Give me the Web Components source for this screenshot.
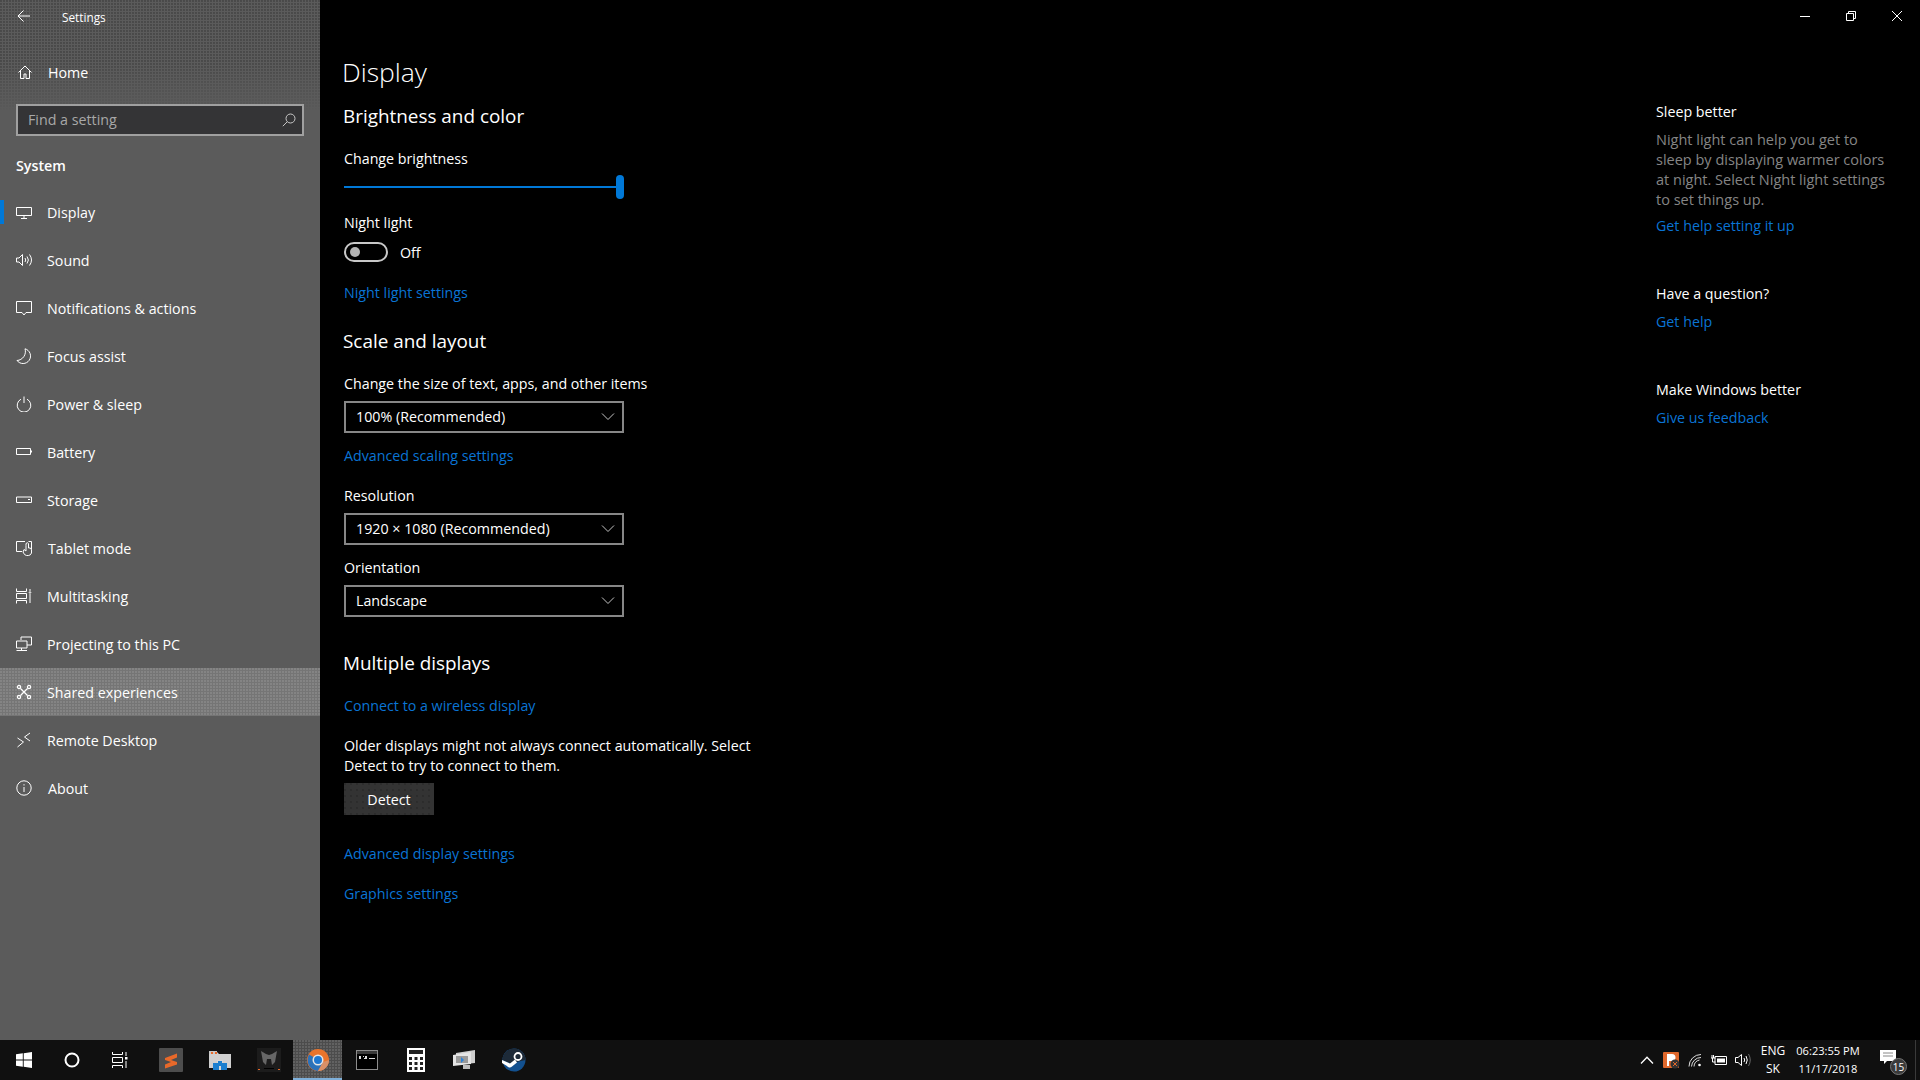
<!DOCTYPE html>
<html><head><meta charset="utf-8"><title>Settings</title>
<style>
html,body{margin:0;padding:0;background:#000;height:100%;overflow:hidden}
body{font-family:"Open Sans","Noto Sans",sans-serif;font-size:14.25px;color:#fff}
</style></head>
<body>
<win-desktop>
  <settings-sidebar slot="side">
    <nav-item icon="display" active>Display</nav-item>
    <nav-item icon="sound">Sound</nav-item>
    <nav-item icon="notif">Notifications &amp; actions</nav-item>
    <nav-item icon="moon">Focus assist</nav-item>
    <nav-item icon="power">Power &amp; sleep</nav-item>
    <nav-item icon="battery">Battery</nav-item>
    <nav-item icon="storage">Storage</nav-item>
    <nav-item icon="tablet" nudge>Tablet mode</nav-item>
    <nav-item icon="multi">Multitasking</nav-item>
    <nav-item icon="project">Projecting to this PC</nav-item>
    <nav-item icon="shared" hover>Shared experiences</nav-item>
    <nav-item icon="remote">Remote Desktop</nav-item>
    <nav-item icon="about" nudge>About</nav-item>
  </settings-sidebar>
  <display-page slot="main"></display-page>
  <help-rail slot="rail"></help-rail>
  <window-controls slot="controls"></window-controls>
  <task-bar slot="bar"></task-bar>
</win-desktop>
<script>
const ICONS={
 home:'<path d="M1.500 8.500 8 2l6.500 6.500M3.500 7v7.500h3.500V10h2v4.500h3.500V7"/>',
 display:'<path d="M.5 3.500h15v8H.5zM8 11.500v2.500M5 14.500h6"/>',
 sound:'<path d="M.5 6h2.500L6.500 2.500v11L3 10H.5zM9 6q1.500 2 0 4M11 4.500q2.800 3.500 0 7M13.500 2.500q4 5.500 0 11"/>',
 notif:'<path d="M.5 1.500h15v11H10l-2 2.500-2-2.500H.5z"/>',
 moon:'<path d="M9 .8A7.500 7.500 0 1 1 1 12.500 9 9 0 0 0 9 .8z"/>',
 power:'<path d="M5 3.200a6.800 6.800 0 1 0 6 0M8 .5v6.500"/>',
 battery:'<path d="M.5 4.500h14v6H.5zM15.500 6.500v2"/>',
 storage:'<path d="M.5 5h15v5.500H.5z"/><path d="M12 7.500h2"/>',
 tablet:'<path d="M6 11.500H.5V1.500H9M12.500 1.500h3V9"/><path d="M10 5.500V3.500q1.500-1.500 2.500 0V8h1.500q1.500.5 1.500 2v3q-1 2.500-3 2.500h-2q-2 0-3.500-3.500L8 9.500l2 1.500z"/>',
 multi:'<path d="M.5.500v3h10v-3M.5 15.500v-3h10v3M.5 5.500h10v5H.5z"/><path d="M14 1v2M14 6v9" /><circle cx="14" cy="4.500" r=".8"/>',
 project:'<path d="M5 4V1h10.500v8H11"/><path d="M.5 5h10.500v7H.5zM.5 14.500h10.500M5.500 12v2.500"/>',
 shared:'<g stroke-width="1.300"><circle cx="3" cy="3" r="1.600"/><circle cx="13" cy="3" r="1.600"/><circle cx="3" cy="13" r="1.600"/><circle cx="13" cy="13" r="1.600"/><path d="M4.500 4.500l7 7M11.500 4.500l-7 7"/></g>',
 remote:'<path d="M1.500 6l6 4-6 5M14 1L8.500 5 14 9"/>',
 about:'<circle cx="8" cy="8" r="7.200"/><path d="M8 7v5M8 4.200v1.300"/>'
};
function svg(name,size=16,sw=1,color='#fff'){return `<svg width="${size}" height="${size}" viewBox="0 0 16 16" fill="none" stroke="${color}" stroke-width="${sw}">${ICONS[name]}</svg>`}
function def(tag,html,extra){customElements.define(tag,class extends HTMLElement{
  connectedCallback(){ if(this.shadowRoot) return; const s=this.attachShadow({mode:'open'}); s.innerHTML=typeof html==='function'?html(this):html; extra&&extra(this,s);} })}

const DITHER=`radial-gradient(circle at 1px 1px,#444 .6px,transparent 1px)`;

def('win-desktop',`<style>
:host{display:grid;grid-template-columns:320px 1fr 264px;grid-template-rows:1040px 40px;width:1920px;height:1080px;background:#000;position:relative}
::slotted([slot=side]){grid-column:1;grid-row:1}
::slotted([slot=main]){grid-column:2;grid-row:1}
::slotted([slot=rail]){grid-column:3;grid-row:1}
::slotted([slot=bar]){grid-column:1/4;grid-row:2}
::slotted([slot=controls]){position:absolute;top:0;right:0}
</style><slot name="side"></slot><slot name="main"></slot><slot name="rail"></slot><slot name="controls"></slot><slot name="bar"></slot>`);

def('settings-sidebar',`<style>
:host{display:block;background:#5b5b5b;position:relative;color:#fff;height:1040px}
.tex{position:absolute;left:0;top:0;width:320px;height:112px;background-image:${DITHER};background-size:3px 3px;-webkit-mask-image:linear-gradient(#000 55%,transparent);mask-image:linear-gradient(#000 55%,transparent)}
.wrap{position:relative}
.title{height:32px;display:flex;align-items:center;padding-left:16px}
.title svg{flex:none}
.title span{margin-left:30px;font-size:11.800px;padding-top:1px}
.home{height:48px;margin-top:16px;display:flex;align-items:center;padding-left:17px}
.home span{margin-left:15px}
.search{box-sizing:border-box;margin:8px 16px 0;height:32px;border:2px solid #a0a0a0;background:#343436;display:flex;align-items:center;justify-content:space-between;padding:0 6px 2px 10px;color:#a8a8a8}
.sys{margin:20px 0 12px 16px;line-height:20px;font-weight:600}
</style>
<div class="tex"></div>
<div class="wrap">
<div class="title"><svg width="16" height="16" viewBox="0 0 16 16" fill="none" stroke="#fff"><path d="M14 8H2M7.500 2.500 2 8l5.500 5.500"/></svg><span>Settings</span></div>
<div class="home"><svg width="16" height="16" viewBox="0 0 16 16" fill="none" stroke="#fff">${ICONS.home}</svg><span>Home</span></div>
<div class="search"><span>Find a setting</span><svg width="14" height="14" viewBox="0 0 14 14" fill="none" stroke="#c8c8c8" style="margin-top:2px"><circle cx="8.500" cy="5.500" r="4.500"/><path d="M5.200 8.800.8 13.200"/></svg></div>
<div class="sys">System</div>
<slot></slot>
</div>`);

def('nav-item',el=>`<style>
:host{display:flex;position:relative;align-items:center;height:48px;padding-left:16px;color:#fff}
:host([hover]){background:#757575;background-image:radial-gradient(circle at 1px 1px,#8a8a8a .6px,transparent 1px);background-size:3px 3px}
:host([active])::before{content:"";position:absolute;left:0;top:12px;width:4px;height:24px;background:#0078d7}
svg{flex:none}
.t{margin-left:15px}
:host([nudge]) .t{margin-left:16px}
</style>${svg(el.getAttribute('icon'))}<span class="t"><slot></slot></span>`);

def('page-h',`<style>:host{display:block;font-size:18.900px;line-height:28px;margin-top:var(--mt,0);margin-left:-1px}</style><slot></slot>`);
def('field-label',`<style>:host{display:block;line-height:20px;margin-top:var(--mt,0)}</style><slot></slot>`);
def('help-link',`<style>:host{display:block;line-height:20px;color:#0a74d4;margin-top:var(--mt,0)}</style><slot></slot>`);
def('combo-box',`<style>
:host{display:flex;box-sizing:border-box;width:280px;height:32px;border:2px solid #868686;background:#000;align-items:center;justify-content:space-between;padding:0 7px 0 10px;margin-top:var(--mt,0)}
span{margin-top:-2px}
</style><span><slot></slot></span><svg width="14" height="10" viewBox="0 0 14 10" fill="none" stroke="#c4c4c4"><path d="M1 1.500 7 7.500l6-6"/></svg>`);
def('range-slider',`<style>
:host{display:flex;align-items:center;width:280px;height:24px;margin-top:var(--mt,0)}
.t{flex:1;height:2px;background:#0078d7}
.k{width:8px;height:24px;border-radius:4px;background:#0078d7}
</style><div class="t"></div><div class="k"></div>`);
def('toggle-switch',`<style>
:host{display:flex;align-items:center;height:20px;margin-top:var(--mt,0)}
.s{box-sizing:border-box;width:44px;height:20px;border:2px solid #c8c8c8;border-radius:10px;display:flex;align-items:center;padding-left:4px}
.d{width:10px;height:10px;border-radius:50%;background:#b4b4b4}
span{margin-left:12px}
</style><div class="s"><div class="d"></div></div><span><slot></slot></span>`);
def('flat-button',`<style>
:host{display:flex;align-items:center;justify-content:center;width:90px;height:32px;background:#333;margin-top:var(--mt,0);background-image:radial-gradient(circle at 1px 1px,#272727 .5px,transparent 1px);background-size:6px 6px}
</style><span><slot></slot></span>`);

def('display-page',`<style>
:host{display:block;padding:52px 0 0 24px;color:#fff}
h1{margin:0 0 0 -2px;font-size:26.500px;line-height:40px;font-weight:300}
</style>
<h1>Display</h1>
<page-h style="--mt:10px">Brightness and color</page-h>
<field-label style="--mt:19px">Change brightness</field-label>
<range-slider style="--mt:6px"></range-slider>
<field-label style="--mt:14px">Night light</field-label>
<toggle-switch style="--mt:9px">Off</toggle-switch>
<help-link style="--mt:21px">Night light settings</help-link>
<page-h style="--mt:24px">Scale and layout</page-h>
<field-label style="--mt:19px">Change the size of text, apps, and other items</field-label>
<combo-box style="--mt:7px">100% (Recommended)</combo-box>
<help-link style="--mt:13px">Advanced scaling settings</help-link>
<field-label style="--mt:20px">Resolution</field-label>
<combo-box style="--mt:7px">1920 × 1080 (Recommended)</combo-box>
<field-label style="--mt:13px">Orientation</field-label>
<combo-box style="--mt:7px">Landscape</combo-box>
<page-h style="--mt:32px">Multiple displays</page-h>
<help-link style="--mt:19px">Connect to a wireless display</help-link>
<field-label style="--mt:20px">Older displays might not always connect automatically. Select<br>Detect to try to connect to them.</field-label>
<flat-button style="--mt:7px">Detect</flat-button>
<help-link style="--mt:29px">Advanced display settings</help-link>
<help-link style="--mt:20px">Graphics settings</help-link>`);

def('help-rail',`<style>
:host{display:block;padding-top:102px;line-height:20px}
.g{color:#858585;margin-top:8px;font-size:14.500px}
.a{color:#0a74d4;margin-top:6px}
.h{margin-top:48px}
.a2{color:#0a74d4;margin-top:8px}
</style>
<div>Sleep better</div>
<div class="g">Night light can help you get to<br>sleep by displaying warmer colors<br>at night. Select Night light settings<br>to set things up.</div>
<div class="a">Get help setting it up</div>
<div class="h">Have a question?</div>
<div class="a2">Get help</div>
<div class="h">Make Windows better</div>
<div class="a2">Give us feedback</div>`);

def('window-controls',`<style>
:host{display:flex}
div{width:46px;height:32px;display:flex;align-items:center;justify-content:center}
</style>
<div><svg width="10" height="10" viewBox="0 0 10 10" stroke="#fff" fill="none"><path d="M0 5.500h10"/></svg></div>
<div><svg width="10" height="10" viewBox="0 0 10 10" stroke="#fff" fill="none"><path d="M.5 2.500h7v7h-7zM2.500 2.500v-2h7v7h-2"/></svg></div>
<div><svg width="10" height="10" viewBox="0 0 10 10" stroke="#fff" fill="none"><path d="M0 0l10 10M10 0 0 10"/></svg></div>`);

const APPS={
 win:`<svg width="16" height="16" viewBox="0 0 16 16" fill="#fff"><path d="M0 2.300 6.800 1.300V7.500H0zM7.700 1.200 16 0V7.500H7.700zM0 8.400H6.800V14.700L0 13.700zM7.700 8.400H16V16L7.700 14.800z"/></svg>`,
 cortana:`<svg width="16" height="16" viewBox="0 0 16 16" fill="none" stroke="#fff" stroke-width="2"><circle cx="8" cy="8" r="6.500"/></svg>`,
 task:`<svg width="16" height="16" viewBox="0 0 16 16" fill="none" stroke="#fff"><path d="M.5 0v2.500h10V0M.5 16v-2.500h10V16M.5 5.500h10v5H.5z"/><path d="M14 0v4M14 9v7" /><rect x="13" y="5" width="2.500" height="2.500" fill="#fff" stroke="none"/></svg>`,
 sublime:`<svg width="24" height="24" viewBox="0 0 24 24"><rect width="24" height="24" rx="1" fill="#4d4d4d"/><path d="M6 10 18 5.500V9.500L12 12l6 2V16.500L6 20.500V16.500L12 14 6 12z" fill="#e8692a"/></svg>`,
 folder:`<svg width="22" height="20" viewBox="0 0 22 20"><path d="M0 2h8l2 2h12v14H0z" fill="#d0d0d0"/><path d="M0 1h8v3H0z" fill="#c8c8c8"/><path d="M2 2h2v2H2zM6 2h2v2H6z" fill="#e8692a"/><path d="M4 13h14v7H4z" fill="#1a7fd0"/><path d="M8 13v-3h6v3zM10 16h2v4h-2z" fill="#d8d8d8"/><path d="M9 13h4v-2H9z" fill="#1a7fd0"/></svg>`,
 pred:`<svg width="24" height="24" viewBox="0 0 24 24"><rect width="24" height="24" fill="#1c1c1c"/><path d="M4 3l5 3 3 1 3-1 5-3-2 11-3 3-1-6h-4l-1 6-3-3z" fill="#666"/><path d="M7 20h10v1H7z" fill="#000"/><path d="M1 21h2v1H1zM21 21h2v1h-2z" fill="#e8692a"/></svg>`,
 chrome:`<svg width="24" height="24" viewBox="0 0 24 24"><circle cx="12" cy="12" r="11" fill="#e8742c"/><path d="M3 6.500A11 11 0 0 0 12 23l5-8.500z" fill="#2d72b8"/><path d="M23 12a11 11 0 0 1-11 11l5-9z" fill="#d89068"/><circle cx="12" cy="12" r="5.500" fill="#e6e6e6"/><circle cx="12" cy="12" r="4" fill="#1f78d1"/></svg>`,
 cmd:`<svg width="22" height="20" viewBox="0 0 22 20"><rect width="22" height="20" fill="#8c8c8c"/><rect x="1" y="1" width="20" height="3" fill="#3a3a3a"/><rect x="1" y="4" width="20" height="15" fill="#000"/><path d="M3 6h2v3H3zM7 6h1v1H7zM9 6h2v3H9zM8 8h1v1H8z" fill="#ddd"/><path d="M13 8h6v1h-6z" fill="#ddd"/></svg>`,
 calc:`<svg width="18" height="24" viewBox="0 0 18 24"><rect width="18" height="24" fill="#fff"/><rect x="2" y="2" width="14" height="4" fill="#222"/><g fill="#222"><rect x="2" y="9" width="3" height="3"/><rect x="7.500" y="9" width="3" height="3"/><rect x="13" y="9" width="3" height="3"/><rect x="2" y="14" width="3" height="3"/><rect x="7.500" y="14" width="3" height="3"/><rect x="13" y="14" width="3" height="3"/><rect x="2" y="19" width="3" height="3"/><rect x="7.500" y="19" width="3" height="3"/><rect x="13" y="19" width="3" height="3"/></g></svg>`,
 monitor:`<svg width="24" height="22" viewBox="0 0 24 22"><path d="M3 4 22 1v13L3 16z" fill="#cfcfcf"/><path d="M0 6 18 3v12L0 17z" fill="#e4e4e4"/><path d="M3 7h12v7H3z" fill="#9a9a9a"/><path d="M8 8l3 3-3 3z" fill="#2b82d9"/><path d="M10 16h7v4h-7z" fill="#bdbdbd"/></svg>`,
 steam:`<svg width="24" height="24" viewBox="0 0 24 24"><circle cx="12" cy="12" r="11.500" fill="#12508f"/><path d="M.5 12a11.500 11.500 0 0 1 23 0l-9 2-5 2z" fill="#1d2a38"/><circle cx="16" cy="8.500" r="3.500" fill="none" stroke="#fff" stroke-width="1.800"/><path d="M0 12l8 3.500 5-4 2 3-5 4a3 3 0 0 1-5-.5L0 15z" fill="#fff"/></svg>`
};
def('task-icon',el=>`<style>
:host{display:flex;align-items:center;justify-content:center;width:49px;height:40px;box-sizing:border-box;position:relative}
:host([on]){background:#4c4c4c;background-image:radial-gradient(circle at 1px 1px,#6a6a6a .6px,transparent 1px);background-size:3px 3px}
:host([on])::after{content:"";position:absolute;left:0;right:0;bottom:0;height:2px;background:#7fb0da}
</style>${APPS[el.getAttribute('app')]}`);
def('task-bar',`<style>
:host{display:flex;align-items:center;background:#101010;height:40px;color:#fff;font-size:12px}
.l{display:flex}
.l .s{width:48px;height:40px;display:flex;align-items:center;justify-content:center}
.gap{width:2px}
.r{margin-left:auto;display:flex;align-items:center;height:40px;padding-right:4px}
.i{width:24px;display:flex;justify-content:center;align-items:center}
.lang{width:36px;text-align:center;line-height:18px}
.time{width:70px;text-align:center;line-height:18px;margin-left:2px;font-size:11.100px}
.note{width:24px;height:24px;margin:0 13px 0 15px;position:relative}
.bdg{position:absolute;right:-5px;bottom:-3px;width:17px;height:17px;border-radius:50%;background:#3a3a3a;border:1px solid #777;box-sizing:border-box;font-size:10px;display:flex;align-items:center;justify-content:center}
.div{width:1px;height:40px;background:#3a3a3a}
</style>
<div class="l"><div class="s">${APPS.win}</div><div class="s">${APPS.cortana}</div><div class="s">${APPS.task}</div></div>
<div class="gap"></div>
<div class="l"><task-icon app="sublime"></task-icon><task-icon app="folder"></task-icon><task-icon app="pred"></task-icon><task-icon app="chrome" on></task-icon><task-icon app="cmd"></task-icon><task-icon app="calc"></task-icon><task-icon app="monitor"></task-icon><task-icon app="steam"></task-icon></div>
<div class="r">
<div class="i"><svg width="14" height="8" viewBox="0 0 14 8" fill="none" stroke="#fff" stroke-width="1.300"><path d="M1 7.500 7 1.200l6 6.300"/></svg></div>
<div class="i"><svg width="17" height="17" viewBox="0 0 17 17"><rect width="16" height="16" rx="1" fill="#e0682c"/><path d="M4 2h5a3 3 0 0 1 0 7H6v5H4z" fill="#fff"/><circle cx="12" cy="12" r="4.500" fill="#333"/><path d="M10 10l4 4M14 10l-4 4" stroke="#e0682c"/></svg></div>
<div class="i"><svg width="14" height="14" viewBox="0 0 14 14" fill="none" stroke="#ddd"><path d="M1 13.500A12 12 0 0 1 13 1.500M3.500 13.500A9.500 9.500 0 0 1 13 4.500M6 13.500a7 7 0 0 1 5.500-6.500"/><circle cx="11.500" cy="12" r="1.300" fill="#fff" stroke="none"/></svg></div>
<div class="i"><svg width="18" height="12" viewBox="0 0 18 12" fill="none" stroke="#fff"><path d="M5 2.500h11.500v8H5z"/><path d="M7 4.500h8v4H7z" fill="#fff" stroke="none"/><path d="M1 4h4.500M2 1v3M3.500 1v3M2.500 4v4h3"/></svg></div>
<div class="i"><svg width="16" height="16" viewBox="0 0 16 16" fill="none" stroke="#fff"><path d="M.5 5.500h2.500L6.500 2.500v11L3 10.500H.5zM9 6q1.300 2 0 4M11 4q2.500 4 0 8"/><path d="M13.500 2q3.500 6 0 12" stroke="#666"/></svg></div>
<div class="lang">ENG<br>SK</div>
<div class="time">06:23:55 PM<br>11/17/2018</div>
<div class="note"><svg width="20" height="18" viewBox="0 0 20 18"><path d="M2 2h16v11h-9l-3 3v-3H2z" fill="#fff"/><path d="M5 5h10M5 8h10" stroke="#888"/></svg><div class="bdg">15</div></div>
<div class="div"></div>
</div>`);
</script>
</body></html>
